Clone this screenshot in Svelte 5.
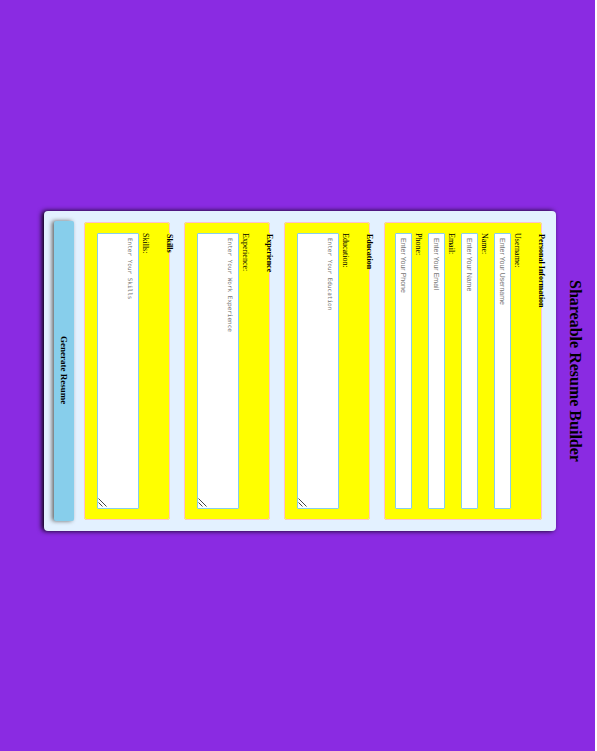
<script>
  const sections = [
    {
      title: 'Personal Information',
      fields: [
        { id: 'username', label: 'Username:', hint: 'Enter Your Username', type: 'text' },
        { id: 'name', label: 'Name:', hint: 'Enter Your Name', type: 'text' },
        { id: 'email', label: 'Email:', hint: 'Enter Your Email', type: 'email' },
        { id: 'phone', label: 'Phone:', hint: 'Enter Your Phone', type: 'tel' }
      ]
    },
    {
      title: 'Education',
      fields: [{ id: 'education', label: 'Education:', hint: 'Enter Your Education', long: true }]
    },
    {
      title: 'Experience',
      fields: [{ id: 'experience', label: 'Experience:', hint: 'Enter Your Work Experience', long: true }]
    },
    {
      title: 'Skills',
      fields: [{ id: 'skills', label: 'Skills:', hint: 'Enter Your Skills', long: true }]
    }
  ];
</script>

<main>
  <h1>Shareable Resume Builder</h1>
  <form onsubmit={(e) => e.preventDefault()}>
    {#each sections as section}
      <fieldset>
        <legend>{section.title}</legend>
        {#each section.fields as field}
          <div class="field" class:long={field.long}>
            <label for={field.id}>{field.label}</label>
            {#if field.long}
              <textarea id={field.id} placeholder={field.hint}></textarea>
              <svg class="grip" viewBox="0 0 9 9" aria-hidden="true">
                <path d="M0.5 0.5 L8.5 8.5 M0.5 4.5 L4.5 8.5" />
              </svg>
            {:else}
              <input id={field.id} type={field.type} placeholder={field.hint} />
            {/if}
          </div>
        {/each}
      </fieldset>
    {/each}
    <button type="submit">Generate Resume</button>
  </form>
</main>

<style>
  :global(body) {
    margin: 0;
    background: #fff;
  }

  /* The whole sheet reads sideways: lines run downwards, blocks run right to left. */
  main {
    writing-mode: vertical-rl;
    text-orientation: sideways;
    box-sizing: border-box;
    width: 100%;
    height: 100vh;
    padding: 0 11px 10px 0;
    border-right: 2px solid #fff;
    background: blueviolet;
    color: #000;
    font: 8px/9px "Liberation Serif", "Times New Roman", serif;
  }

  h1 {
    margin: 0;
    font-size: 16px;
    line-height: 18px;
    text-align: center;
  }

  form {
    display: flex;
    flex-direction: column;
    gap: 10px;
    box-sizing: border-box;
    inline-size: 320px;
    max-inline-size: 100%;
    margin-block-start: 10px;
    margin-inline: auto;
    padding: 10px;
    border-radius: 4px;
    background: #e3f1ff;
    box-shadow: -2px 0 5px #000;
  }

  fieldset {
    min-inline-size: 0;
    margin: 0;
    margin-inline: 1px;
    padding: 10px;
    border: 1px solid pink;
    border-radius: 3px;
    background: yellow;
  }

  legend {
    padding: 0;
    padding-inline: 1px;
    font-weight: bold;
  }

  .field {
    position: relative;
    display: flex;
    flex-direction: column;
    gap: 2px;
    margin-block-start: 5px;
  }

  .long {
    margin-block-end: 2px;
  }

  input,
  textarea {
    writing-mode: inherit;
    text-orientation: inherit;
    box-sizing: border-box;
    inline-size: 100%;
    margin: 0;
    border: 1px solid skyblue;
    border-radius: 1px;
    background: #fff;
  }

  input {
    block-size: 17px;
    padding: 4px;
    font: 7px/7px "Liberation Sans", Arial, sans-serif;
  }

  textarea {
    block-size: 42px;
    padding: 4px;
    font: 6px/8px "DejaVu Sans Mono", "Liberation Mono", monospace;
    resize: none;
  }

  .grip {
    position: absolute;
    left: 1px;
    bottom: 2px;
    width: 9px;
    height: 9px;
    fill: none;
    stroke: #444;
    stroke-width: 1;
    pointer-events: none;
  }

  input::placeholder,
  textarea::placeholder {
    color: #757575;
  }

  button {
    writing-mode: inherit;
    text-orientation: inherit;
    block-size: 20px;
    padding: 0;
    border: 0;
    border-radius: 2px;
    background: skyblue;
    box-shadow: -2px 0 4px #666;
    color: #000;
    font: bold 9px/10px "Liberation Serif", "Times New Roman", serif;
    cursor: pointer;
  }
</style>
